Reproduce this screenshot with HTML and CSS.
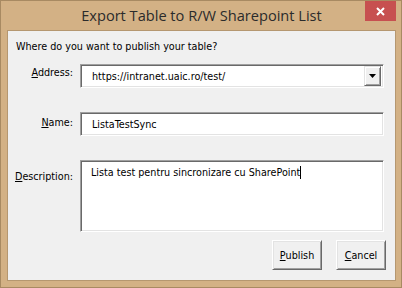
FILE: index.html
```html
<!DOCTYPE html>
<html lang="en">
<head>
  <meta charset="UTF-8">
  <title>Export Table to R/W Sharepoint List</title>
  <link rel="stylesheet" href="styles.css">
</head>
<body>
  <div class="window">
    <div class="titlebar">
      <span class="title">Export Table to R/W Sharepoint List</span>
      <div class="close-btn">
        <svg width="9" height="9" viewBox="0 0 9 9">
          <path d="M1 1 L8 8 M8 1 L1 8" stroke="#fff" stroke-width="2"/>
        </svg>
      </div>
    </div>

    <div class="client">
      <p class="prompt">Where do you want to publish your table?</p>

      <div class="form">
        <label class="label label-address"><u>A</u>ddress:</label>
        <div class="field combo">
          <span class="value">https://intranet.uaic.ro/test/</span>
          <div class="drop-btn">
            <svg width="7" height="4" viewBox="0 0 7 4"><path d="M0 0 H7 L3.5 4 Z" fill="#000"/></svg>
          </div>
        </div>

        <label class="label label-name"><u>N</u>ame:</label>
        <div class="field text">
          <span class="value">ListaTestSync</span>
        </div>

        <label class="label label-desc"><u>D</u>escription:</label>
        <div class="field memo">
          <span class="value caret">Lista test pentru sincronizare cu SharePoint</span>
        </div>
      </div>

      <div class="actions">
        <div class="button"><u>P</u>ublish</div>
        <div class="button"><u>C</u>ancel</div>
      </div>
    </div>
  </div>
</body>
</html>
```

FILE: styles.css
```css
body {
  margin: 0;
  background: #ffffff;
}

.window {
  width: 402px;
  height: 288px;
  box-sizing: border-box;
  background: #d3b185;
  border: 1px solid #a88a62;
  padding: 0 5px 6px 6px;
  display: flex;
  flex-direction: column;
}

.titlebar {
  height: 29px;
  flex-shrink: 0;
  display: flex;
  align-items: center;
  justify-content: center;
  position: relative;
}

.title {
  font-family: "Open Sans", "Noto Sans", sans-serif;
  font-size: 14.6px;
  color: #2b2b2b;
  margin-top: -1px;
}

.close-btn {
  position: absolute;
  right: 0;
  top: 0;
  width: 31px;
  height: 20px;
  background: #c75050;
  display: flex;
  align-items: center;
  justify-content: center;
}

.client {
  flex: 1;
  background: #f0f0f0;
  border: 1px solid #b59770;
  font-family: "DejaVu Sans Condensed", "Liberation Sans", sans-serif;
  font-size: 10.7px;
  color: #000;
  display: flex;
  flex-direction: column;
}

.prompt {
  margin: 9px 0 0 8px;
}

.form {
  display: grid;
  grid-template-columns: 65px 304px;
  column-gap: 7px;
  row-gap: 24px;
  margin-top: 11px;
}

.label {
  text-align: right;
  align-self: start;
}

.label-address { padding-top: 2px; }
.label-name { padding-top: 4px; }
.label-desc { padding-top: 10px; }

.field {
  box-sizing: border-box;
  background: #fff;
  border: 1px solid;
  border-color: #a0a0a0 #ffffff #ffffff #a0a0a0;
  box-shadow: inset 1px 1px #696969, inset -1px -1px #e3e3e3;
  display: flex;
  padding-left: 11px;
}

.combo {
  height: 24px;
  align-items: center;
  padding-right: 2px;
}

.combo .value {
  flex: 1;
}

.text {
  height: 24px;
  align-items: center;
}

.memo {
  height: 72px;
  align-items: flex-start;
  padding-top: 5px;
  padding-left: 10px;
}

.caret {
  border-right: 1px solid #000;
}

.drop-btn {
  width: 17px;
  height: 20px;
  box-sizing: border-box;
  background: #f0f0f0;
  border: 1px solid;
  border-color: #e3e3e3 #696969 #696969 #e3e3e3;
  box-shadow: inset 1px 1px #fff, inset -1px -1px #a0a0a0;
  display: flex;
  align-items: center;
  justify-content: center;
}

.actions {
  display: flex;
  justify-content: flex-end;
  gap: 14px;
  margin: 8px 9px 0 0;
}

.button {
  width: 50px;
  height: 30px;
  box-sizing: border-box;
  background: #f0f0f0;
  border: 1px solid;
  border-color: #ffffff #696969 #696969 #ffffff;
  box-shadow: inset 1px 1px #e3e3e3, inset -1px -1px #a0a0a0;
  display: flex;
  align-items: center;
  justify-content: center;
}
```
